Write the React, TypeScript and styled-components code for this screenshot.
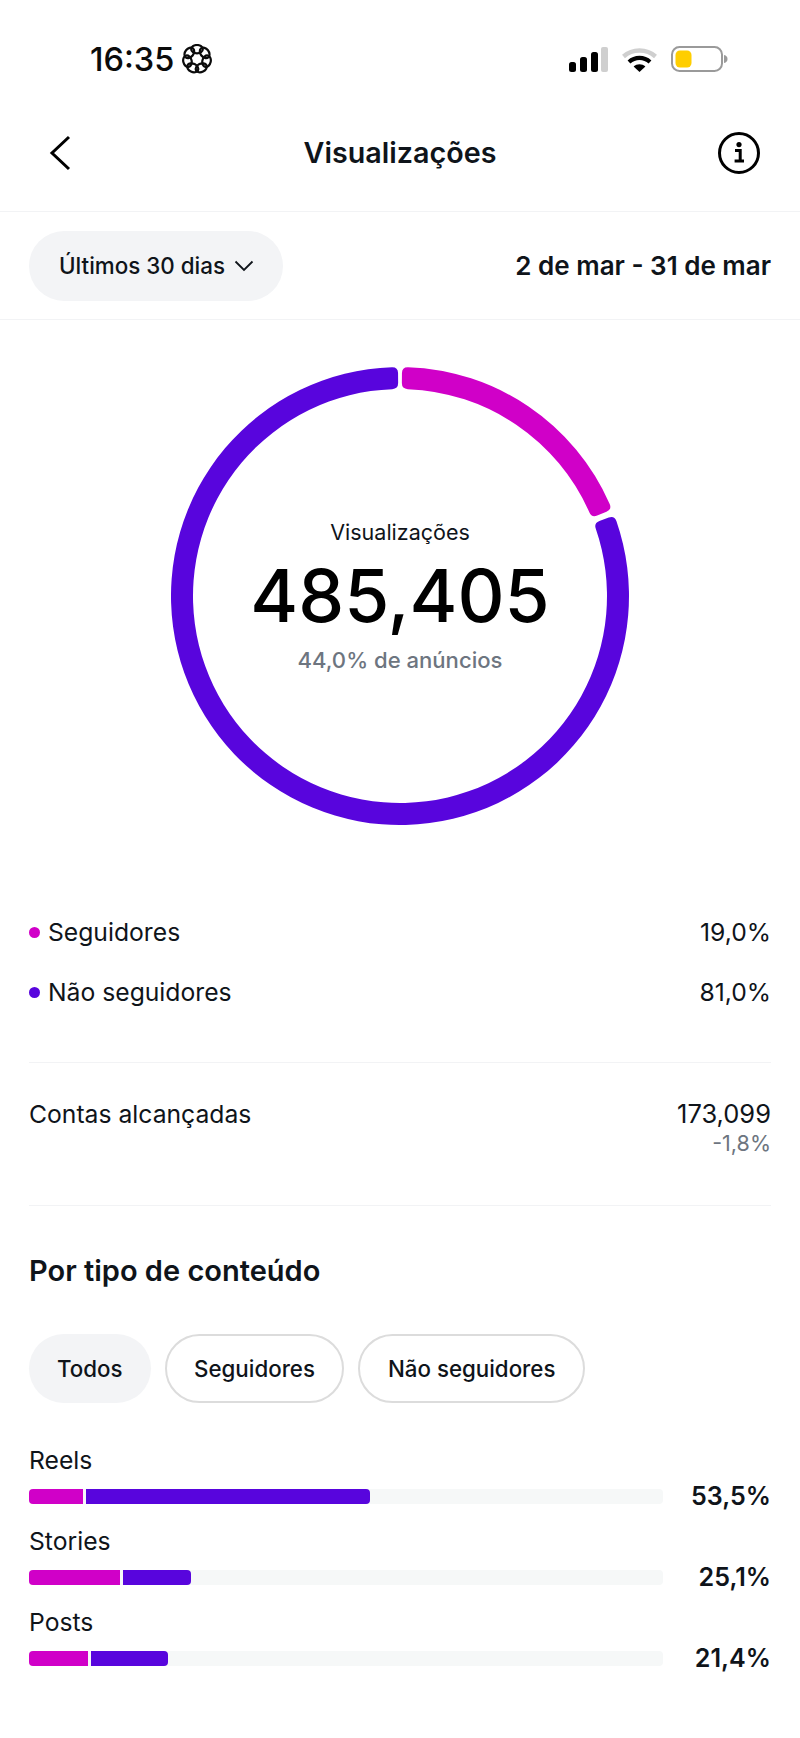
import React from 'react'
import styled, { createGlobalStyle } from 'styled-components'

const MAGENTA = '#d000c8'
const PURPLE = '#5805dd'
const INK = '#0f141a'
const GREY = '#6d7580'
const LINE = '#f2f3f5'

const GlobalStyle = createGlobalStyle`
  html, body {
    margin: 0;
    padding: 0;
    background: #fff;
  }
  body {
    font-family: Inter, "Liberation Sans", sans-serif;
    color: ${INK};
  }
`

const Page = styled.div`
  width: 800px;
  height: 1738px;
  overflow: hidden;
  background: #fff;
`

const StatusBar = styled.div`
  height: 94px;
  box-sizing: border-box;
  padding: 41px 72px 0 90px;
  display: flex;
  align-items: flex-start;
  justify-content: space-between;
`

const TimeBox = styled.div`
  display: flex;
  align-items: center;
  gap: 8px;
  height: 36px;
  font-size: 32.5px;
  font-weight: 500;
  color: #0b0b0b;
`

const StatusIcons = styled.div`
  display: flex;
  align-items: center;
  gap: 14px;
  height: 36px;
`

const NavBar = styled.div`
  height: 118px;
  box-sizing: border-box;
  padding: 0 40px;
  display: flex;
  align-items: center;
  justify-content: space-between;
  border-bottom: 1px solid ${LINE};
`

const NavTitle = styled.div`
  font-size: 28.7px;
  font-weight: 600;
`

const FilterRow = styled.div`
  height: 108px;
  box-sizing: border-box;
  padding: 0 29px;
  display: flex;
  align-items: center;
  justify-content: space-between;
  border-bottom: 1px solid ${LINE};
`

const RangePill = styled.div`
  width: 254px;
  height: 70px;
  box-sizing: border-box;
  padding-left: 30px;
  display: flex;
  align-items: center;
  gap: 9px;
  border-radius: 35px;
  background: #f3f4f6;
  font-size: 22.4px;
  font-weight: 500;
`

const DateRange = styled.div`
  font-size: 26px;
  font-weight: 600;
`

const ChartArea = styled.div`
  padding-top: 47px;
  display: flex;
  justify-content: center;
`

const Ring = styled.div`
  position: relative;
  width: 458px;
  height: 458px;
`

const RingCenter = styled.div`
  position: absolute;
  inset: 0;
  display: flex;
  flex-direction: column;
  align-items: center;
`

const RingLabel = styled.div`
  margin-top: 148px;
  font-size: 21.5px;
  line-height: 34px;
`

const RingValue = styled.div`
  margin-top: 5px;
  font-size: 73px;
  line-height: 84px;
  font-weight: 500;
  color: #000;
`

const RingSub = styled.div`
  margin-top: 6px;
  font-size: 22.1px;
  line-height: 32px;
  font-weight: 500;
  color: ${GREY};
`

const Legend = styled.div`
  margin: 77px 29px 0;
  padding-bottom: 40px;
  border-bottom: 1px solid ${LINE};
`

const LegendRow = styled.div`
  height: 60px;
  display: flex;
  align-items: center;
  justify-content: space-between;
  font-size: 24.7px;
`

const LegendName = styled.div`
  display: flex;
  align-items: center;
  gap: 8px;
`

const Dot = styled.span<{ $color: string }>`
  width: 11px;
  height: 11px;
  border-radius: 50%;
  background: ${(p) => p.$color};
`

const Reach = styled.div`
  margin: 0 29px;
  height: 143px;
  box-sizing: border-box;
  padding-top: 34px;
  display: flex;
  justify-content: space-between;
  align-items: flex-start;
  border-bottom: 1px solid ${LINE};
  font-size: 24.7px;
  line-height: 34px;
`

const ReachValue = styled.div`
  text-align: right;
  font-size: 25.5px;
`

const ReachDelta = styled.div`
  font-size: 21.5px;
  line-height: 25px;
  color: ${GREY};
`

const Heading = styled.h2`
  margin: 47px 29px 0;
  font-size: 29px;
  line-height: 36px;
  font-weight: 600;
`

const Tabs = styled.div`
  margin: 45px 29px 0;
  display: flex;
  gap: 14px;
`

const Tab = styled.div<{ $active?: boolean }>`
  height: 69px;
  box-sizing: border-box;
  padding: 0 ${(p) => (p.$active ? 28 : 27.5)}px;
  display: flex;
  align-items: center;
  border-radius: 35px;
  font-size: 22.3px;
  font-weight: 500;
  background: ${(p) => (p.$active ? '#f3f4f6' : '#fff')};
  border: ${(p) => (p.$active ? 'none' : '2px solid #dcdcdc')};
`

const Breakdown = styled.div`
  margin: 41px 29px 0;
`

const BreakdownRow = styled.div`
  height: 81px;
`

const RowLabel = styled.div`
  font-size: 24.7px;
  line-height: 32px;
`

const RowBody = styled.div`
  height: 30px;
  margin-top: 5px;
  display: flex;
  align-items: center;
  justify-content: space-between;
`

const Track = styled.div`
  width: 634px;
  height: 15px;
  display: flex;
  gap: 3px;
  border-radius: 4px;
  background: #f6f8f8;
`

const Fill = styled.div<{ $color: string; $width: number; $end?: boolean }>`
  width: ${(p) => p.$width}px;
  background: ${(p) => p.$color};
  border-radius: ${(p) => (p.$end ? '0 4px 4px 0' : '4px 0 0 4px')};
`

const RowPct = styled.div`
  font-size: 25.1px;
  font-weight: 600;
`

const polar = (deg: number, r: number) => {
  const a = (deg * Math.PI) / 180
  return `${(229 + r * Math.sin(a)).toFixed(2)} ${(229 - r * Math.cos(a)).toFixed(2)}`
}

// ring segment with slightly rounded ends
const sector = (from: number, to: number) => {
  const ro = 229
  const ri = 207
  const c = 6
  const dOut = ((c / ro) * 180) / Math.PI
  const dIn = ((c / ri) * 180) / Math.PI
  const large = to - from > 180 ? 1 : 0
  return [
    `M ${polar(from + dOut, ro)}`,
    `A ${ro} ${ro} 0 ${large} 1 ${polar(to - dOut, ro)}`,
    `Q ${polar(to, ro)} ${polar(to, ro - c)}`,
    `L ${polar(to, ri + c)}`,
    `Q ${polar(to, ri)} ${polar(to - dIn, ri)}`,
    `A ${ri} ${ri} 0 ${large} 0 ${polar(from + dIn, ri)}`,
    `Q ${polar(from, ri)} ${polar(from, ri + c)}`,
    `L ${polar(from, ro - c)}`,
    `Q ${polar(from, ro)} ${polar(from + dOut, ro)}`,
    'Z',
  ].join(' ')
}

const petals = [0, 1, 2, 3, 4, 5, 6]

const FocusIcon = () => (
  <svg width="30" height="30" viewBox="0 0 30 30" fill="none" stroke="#0b0b0b" strokeWidth="2.2">
    {petals.map((i) => (
      <ellipse key={i} cx="15" cy="5.2" rx="5.8" ry="4.2" transform={`rotate(${(i * 360) / 7} 15 15)`} />
    ))}
  </svg>
)

const SignalIcon = () => (
  <svg width="39" height="25" viewBox="0 0 39 25">
    <rect x="0" y="15" width="7" height="10" rx="2.5" fill="#000" />
    <rect x="11" y="10" width="7" height="15" rx="2.5" fill="#000" />
    <rect x="22" y="5" width="7" height="20" rx="2.5" fill="#000" />
    <rect x="32" y="0" width="7" height="25" rx="2" fill="#cfcfcf" />
  </svg>
)

const WifiIcon = () => (
  <svg width="35" height="25" viewBox="0 0 35 25" fill="none">
    <path d="M1.5 9.5 C10.5 1.5 24.5 1.5 33.5 9.5" stroke="#cfcfcf" strokeWidth="4.4" />
    <path d="M7 15 C13 9.6 22 9.6 28 15" stroke="#000" strokeWidth="4.2" />
    <path d="M11.6 19.4 C15 16.4 20 16.4 23.4 19.4 L17.5 25 Z" fill="#000" />
  </svg>
)

const BatteryIcon = () => (
  <svg width="57" height="26" viewBox="0 0 57 26" fill="none">
    <rect x="1" y="1" width="50" height="24" rx="7.5" stroke="#9a9a9a" strokeWidth="2" />
    <rect x="4.5" y="4.5" width="16" height="17" rx="4.5" fill="#ffce00" />
    <path d="M53 9 C55.5 9.5 56.5 11 56.5 13 C56.5 15 55.5 16.5 53 17 Z" fill="#9a9a9a" />
  </svg>
)

const BackIcon = () => (
  <svg width="42" height="42" viewBox="0 0 42 42" fill="none">
    <path d="M29 5 L12 21 L29 37" stroke="#000" strokeWidth="3" />
  </svg>
)

const InfoIcon = () => (
  <svg width="42" height="42" viewBox="0 0 42 42" fill="none">
    <circle cx="21" cy="21" r="19.5" stroke="#000" strokeWidth="3" />
    <circle cx="21" cy="12.6" r="2.6" fill="#000" />
    <path d="M17 18.5 H22.2 V28.5 M16.6 29 H26" stroke="#000" strokeWidth="3" />
  </svg>
)

const CaretIcon = () => (
  <svg width="20" height="12" viewBox="0 0 20 12" fill="none">
    <path d="M1.5 1.5 L10 10 L18.5 1.5" stroke={INK} strokeWidth="1.8" />
  </svg>
)

const rows = [
  { name: 'Reels', pct: '53,5%', first: 54, second: 284 },
  { name: 'Stories', pct: '25,1%', first: 91, second: 68 },
  { name: 'Posts', pct: '21,4%', first: 59, second: 77 },
]

export default function App() {
  return (
    <Page>
      <GlobalStyle />
      <StatusBar>
        <TimeBox>
          16:35
          <FocusIcon />
        </TimeBox>
        <StatusIcons>
          <SignalIcon />
          <WifiIcon />
          <BatteryIcon />
        </StatusIcons>
      </StatusBar>

      <NavBar>
        <BackIcon />
        <NavTitle>Visualizações</NavTitle>
        <InfoIcon />
      </NavBar>

      <FilterRow>
        <RangePill>
          Últimos 30 dias
          <CaretIcon />
        </RangePill>
        <DateRange>2 de mar - 31 de mar</DateRange>
      </FilterRow>

      <ChartArea>
        <Ring>
          <svg width="458" height="458" viewBox="0 0 458 458">
            <path d={sector(0.5, 67.8)} fill={MAGENTA} />
            <path d={sector(69.4, 359.5)} fill={PURPLE} />
          </svg>
          <RingCenter>
            <RingLabel>Visualizações</RingLabel>
            <RingValue>485,405</RingValue>
            <RingSub>44,0% de anúncios</RingSub>
          </RingCenter>
        </Ring>
      </ChartArea>

      <Legend>
        <LegendRow>
          <LegendName>
            <Dot $color={MAGENTA} />
            Seguidores
          </LegendName>
          <div>19,0%</div>
        </LegendRow>
        <LegendRow>
          <LegendName>
            <Dot $color={PURPLE} />
            Não seguidores
          </LegendName>
          <div>81,0%</div>
        </LegendRow>
      </Legend>

      <Reach>
        <div>Contas alcançadas</div>
        <ReachValue>
          173,099
          <ReachDelta>-1,8%</ReachDelta>
        </ReachValue>
      </Reach>

      <Heading>Por tipo de conteúdo</Heading>

      <Tabs>
        <Tab $active>Todos</Tab>
        <Tab>Seguidores</Tab>
        <Tab>Não seguidores</Tab>
      </Tabs>

      <Breakdown>
        {rows.map((row) => (
          <BreakdownRow key={row.name}>
            <RowLabel>{row.name}</RowLabel>
            <RowBody>
              <Track>
                <Fill $color={MAGENTA} $width={row.first} />
                <Fill $color={PURPLE} $width={row.second} $end />
              </Track>
              <RowPct>{row.pct}</RowPct>
            </RowBody>
          </BreakdownRow>
        ))}
      </Breakdown>
    </Page>
  )
}
